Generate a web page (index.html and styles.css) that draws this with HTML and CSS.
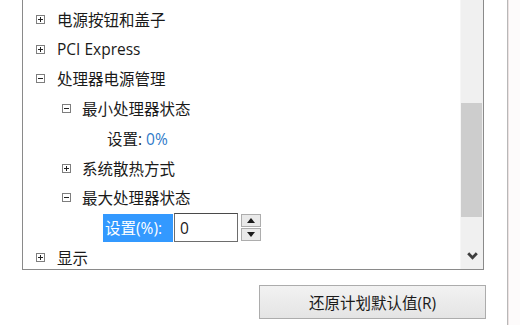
FILE: index.html
```html
<!DOCTYPE html>
<html lang="zh-CN">
<head>
<meta charset="utf-8">
<link rel="stylesheet" href="styles.css">
</head>
<body>
<div class="page">
  <div class="main">
    <div class="listbox">
      <div class="tree">
        <div class="row lv0"><span class="exp plus"></span><span class="label">电源按钮和盖子</span></div>
        <div class="row lv0"><span class="exp plus"></span><span class="label">PCI Express</span></div>
        <div class="row lv0"><span class="exp minus"></span><span class="label">处理器电源管理</span></div>
        <div class="row lv1"><span class="exp minus"></span><span class="label">最小处理器状态</span></div>
        <div class="row lv2"><span class="label">设置: <span class="val">0%</span></span></div>
        <div class="row lv1"><span class="exp plus"></span><span class="label">系统散热方式</span></div>
        <div class="row lv1"><span class="exp minus"></span><span class="label">最大处理器状态</span></div>
        <div class="row lv2 edit">
          <span class="sel">设置(%):</span>
          <span class="input">0</span>
          <span class="spin">
            <span class="sbtn"><svg width="8" height="5" viewBox="0 0 8 5"><path d="M0 5 L4 0 L8 5 Z" fill="#1a1a1a"/></svg></span>
            <span class="sbtn"><svg width="8" height="5" viewBox="0 0 8 5"><path d="M0 0 L4 5 L8 0 Z" fill="#1a1a1a"/></svg></span>
          </span>
        </div>
        <div class="row lv0"><span class="exp plus"></span><span class="label">显示</span></div>
      </div>
      <div class="scrollbar">
        <div class="track-top"></div>
        <div class="thumb"></div>
        <div class="track-bottom"></div>
        <div class="arrow"><svg width="11" height="8" viewBox="0 0 11 8"><path d="M1.2 1.2 L5.5 5.8 L9.8 1.2" fill="none" stroke="#3e3e3e" stroke-width="2.8"/></svg></div>
      </div>
    </div>
    <div class="actions">
      <button class="btn">还原计划默认值(R)</button>
    </div>
  </div>
  <div class="edge"></div>
</div>
</body>
</html>
```
FILE: styles.css
```css
* { box-sizing: border-box; }
html, body { margin: 0; padding: 0; background: #ffffff; }
body {
  width: 520px; height: 325px; overflow: hidden;
  font-family: "Open Sans", "Noto Sans CJK SC", sans-serif;
  font-size: 15.5px; color: #1a1a1a;
}
.page { display: flex; height: 325px; }
.main { width: 507px; padding-left: 22px; display: flex; flex-direction: column; }
.edge { width: 13px; border-left: 1px solid #b8b8b8; box-shadow: inset 1px 0 0 #ece2e2; background: #fdfbfb; }

.listbox {
  width: 462px; height: 270px;
  border-left: 1px solid #8a8a8a; border-right: 1px solid #8a8a8a; border-bottom: 1px solid #8a8a8a;
  display: flex;
}
.tree { flex: 1; padding-top: 4.5px; }
.row { height: 29.75px; display: flex; align-items: center; white-space: nowrap; }
.lv0 { padding-left: 13px; }
.lv1 { padding-left: 39px; }
.lv2 { padding-left: 84px; }
.edit { padding-left: 80px; }
.exp {
  width: 9px; height: 9px; border: 1px solid #7e7e7e; background: #fff;
  position: relative; margin-right: 12px; flex: none;
}
.exp::before { content: ""; position: absolute; left: 1px; top: 3px; width: 5px; height: 1px; background: #222; }
.plus::after { content: ""; position: absolute; left: 3px; top: 1px; width: 1px; height: 5px; background: #222; }
.lv1 .exp { margin-right: 11px; }
.val { color: #2f7ac9; }

.sel {
  background: #3399ff; color: #fff; height: 28px; width: 70px;
  display: flex; align-items: center; padding-left: 2px;
}
.input {
  width: 64px; height: 29px; margin-left: 1px; border: 1px solid #6d6d6d; border-top-color: #4a4a4a;
  background: #fff; display: flex; align-items: center; padding-left: 5px;
}
.spin { display: flex; flex-direction: column; margin-left: 3px; gap: 1px; }
.sbtn {
  width: 20px; height: 13px; border: 1px solid #adadad; background: #e9e9e9;
  display: flex; align-items: center; justify-content: center;
}

.scrollbar { width: 23px; background: #f0f0f0; display: flex; flex-direction: column; border-left: 1px solid #f6f6f6; }
.track-top { height: 103px; }
.thumb { height: 114px; background: #cdcdcd; margin: 0 1px 0 0; }
.track-bottom { flex: 1; }
.arrow { height: 26px; display: flex; justify-content: center; align-items: flex-start; padding-top: 9px; }

.actions { display: flex; justify-content: flex-end; padding-top: 15px; padding-right: 21px; }
.btn {
  width: 227px; height: 34px; border: 1px solid #acacac;
  background: linear-gradient(#f2f2f2, #e4e4e4);
  font-family: "Open Sans", "Noto Sans CJK SC", sans-serif; font-size: 15.5px; color: #1a1a1a;
  padding: 0;
}
```
